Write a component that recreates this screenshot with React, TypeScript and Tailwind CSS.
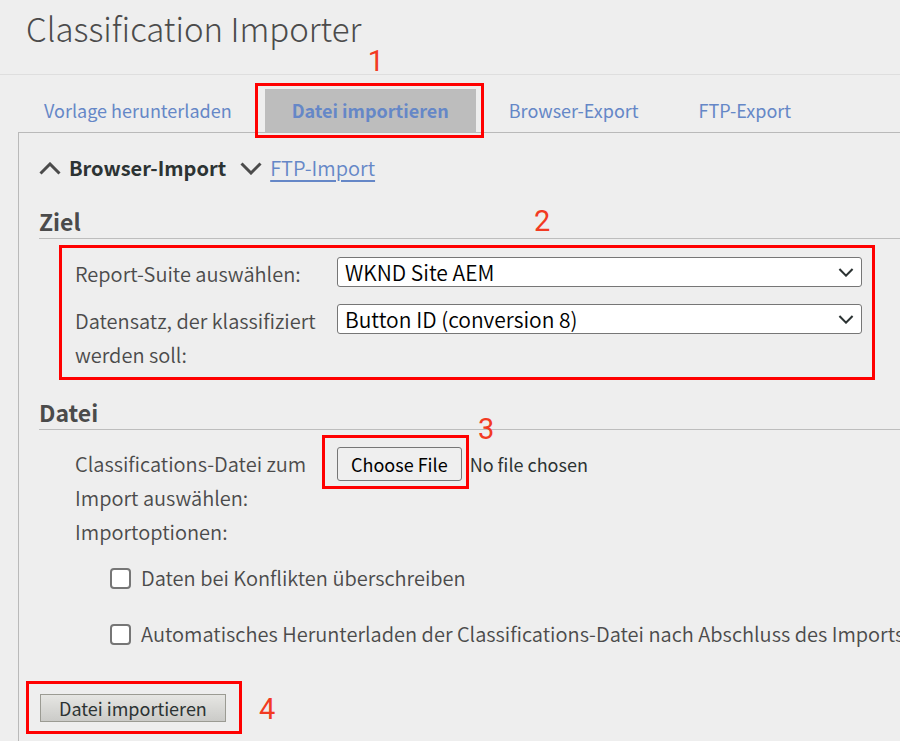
import type { ReactNode } from "react";
import { clsx } from "clsx";

const tabs = [
  { label: "Vorlage herunterladen", active: false },
  { label: "Datei importieren", active: true },
  { label: "Browser-Export", active: false },
  { label: "FTP-Export", active: false },
];

function Marker({ className }: { className: string }) {
  return (
    <span
      aria-hidden="true"
      className={clsx("pointer-events-none absolute border-3 border-[#ff0000]", className)}
    />
  );
}

function Step({ className, children }: { className: string; children: ReactNode }) {
  return (
    <span
      className={clsx(
        "pointer-events-none absolute font-[Roboto,'Liberation_Sans',sans-serif] text-[29px] leading-8 font-normal text-[#f23a22]",
        className,
      )}
    >
      {children}
    </span>
  );
}

function Chevron({ up = false, className }: { up?: boolean; className: string }) {
  return (
    <svg viewBox="0 0 22 13" fill="none" stroke="currentColor" aria-hidden="true" className={className}>
      <path d={up ? "M1.5 11.5 11 2l9.5 9.5" : "M1.5 1.5 11 11l9.5-9.5"} strokeWidth="3" />
    </svg>
  );
}

function Heading({ children }: { children: ReactNode }) {
  return (
    <h2 className="h-[34px] border-b border-[#bdbdbd] text-[23px] leading-8 font-bold">{children}</h2>
  );
}

function SelectRow({ id, label, value }: { id: string; label: string; value: string }) {
  return (
    <div className="flex items-start">
      <label htmlFor={id} className="w-[262px] shrink-0 pr-4">
        {label}
      </label>
      <div className="relative flex-1">
        <select
          id={id}
          className="block h-[30px] w-full appearance-none rounded-[3px] border border-[#767676] bg-white pl-[7px] text-[21px] leading-7 text-black"
        >
          <option>{value}</option>
        </select>
        <Chevron className="pointer-events-none absolute top-[11px] right-2 h-[9px] w-4 text-[#2c3333]" />
      </div>
    </div>
  );
}

function CheckRow({ label }: { label: string }) {
  return (
    <label className="flex items-center gap-[10px] whitespace-nowrap">
      <input
        type="checkbox"
        className="size-[21px] shrink-0 appearance-none rounded-[4px] border-2 border-[#767676] bg-white checked:bg-[#6688cc]"
      />
      {label}
    </label>
  );
}

export default function App() {
  return (
    <div className="flex min-h-screen flex-col overflow-hidden bg-[#eeeeee] font-['Noto_Sans_CJK_SC','Open_Sans',sans-serif] text-xl leading-[34px] font-[350] text-[#4b4b4b]">
      <header className="border-b border-[#dedede] px-[26px] pt-2 pb-[26px]">
        <h1 className="text-[33px] leading-10 font-light">Classification Importer</h1>
      </header>

      <nav className="flex gap-[6px] pt-[14px] pl-[17px] text-lg leading-[43px] font-normal text-[#6587c7]">
        {tabs.map((tab) => (
          <div key={tab.label} className="relative">
            <a
              href="#"
              className={clsx("block px-[27px] whitespace-nowrap", tab.active && "bg-[#bdbdbd] font-bold")}
            >
              {tab.label}
            </a>
            {tab.active && (
              <>
                <Marker className="-top-[6px] -right-2 -bottom-[6px] -left-[10px]" />
                <Step className="-top-11 left-[103px]">1</Step>
              </>
            )}
          </div>
        ))}
      </nav>

      <main className="ml-[18px] flex-1 border-t border-l border-[#b9b9b9] pt-[18px] pb-[18px] pl-5">
        <div className="flex items-center">
          <button type="button" className="flex items-center gap-2 font-bold text-[#2c3333]">
            <Chevron up className="h-[13px] w-[22px] text-[#4b4b4b]" />
            Browser-Import
          </button>
          <Chevron className="ml-[14px] h-[13px] w-[22px]" />
          <a href="#" className="ml-2 text-[#6587c7] underline underline-offset-4">
            FTP-Import
          </a>
        </div>

        <section className="relative mt-5">
          <Heading>Ziel</Heading>
          <Step className="top-0 left-[495px]">2</Step>
          <div className="relative flex flex-col gap-[13px] pt-[18px] pr-[38px] pl-9">
            <SelectRow id="suite" label="Report-Suite auswählen:" value="WKND Site AEM" />
            <SelectRow
              id="dataset"
              label="Datensatz, der klassifiziert werden soll:"
              value="Button ID (conversion 8)"
            />
            <Marker className="top-[6px] right-[25px] -bottom-2 left-5" />
          </div>
        </section>

        <section className="mt-6">
          <Heading>Datei</Heading>
          <div className="pt-[17px] pl-9">
            <div className="relative flex items-start">
              <label htmlFor="file" className="w-[262px] shrink-0 pr-4">
                Classifications-Datei zum Import auswählen:
              </label>
              <input
                id="file"
                type="file"
                className="min-w-0 flex-1 text-lg leading-[34px] font-normal text-[#2c3333] file:mr-2 file:h-[34px] file:rounded-[3px] file:border file:border-solid file:border-[#767676] file:bg-[#efefef] file:px-[13px] file:leading-8 file:text-black"
              />
              <Marker className="-top-3 left-[247px] h-[54px] w-[147px]" />
              <Step className="-top-[34px] left-[403px]">3</Step>
            </div>
            <fieldset>
              <legend>Importoptionen:</legend>
              <div className="flex flex-col gap-[22px] pt-3 pl-[35px]">
                <CheckRow label="Daten bei Konflikten überschreiben" />
                <CheckRow label="Automatisches Herunterladen der Classifications-Datei nach Abschluss des Imports" />
              </div>
            </fieldset>
          </div>
        </section>

        <div className="relative mt-[43px] ml-px w-fit">
          <button
            type="button"
            className="block h-7 border border-[#9b9b93] bg-linear-to-b from-[#e6e6e3] to-[#cbcbc8] px-[18px] text-lg leading-[26px] font-normal text-[#2c3333]"
          >
            Datei importieren
          </button>
          <Marker className="-top-[13px] -right-4 -bottom-3 -left-[14px]" />
          <Step className="-top-[1px] left-[219px]">4</Step>
        </div>
      </main>
    </div>
  );
}
